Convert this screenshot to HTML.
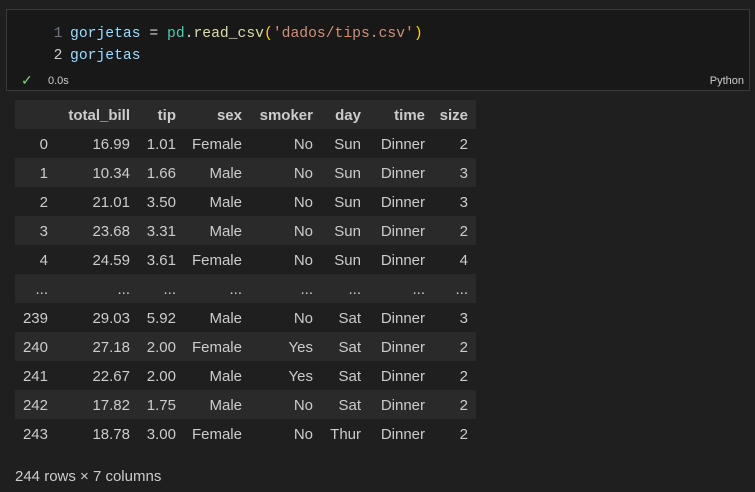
<!DOCTYPE html><html><head><style>
body{margin:0;width:755px;height:492px;background:#1f1f1f;overflow:hidden;font-family:"Liberation Sans",sans-serif;color:#cccccc}
.cell{position:absolute;left:6px;top:9px;width:742px;height:80px;background:#181818;border:1px solid #3a3a3a}
.code{position:absolute;font-family:"Liberation Mono",monospace;font-size:14.7px;left:39px}
.ln{color:#6e7681;display:inline-block;width:24px;text-align:center}
table{position:absolute;left:15px;top:100px;border-collapse:collapse;font-size:15px;table-layout:fixed;width:461px}
td,th{height:29px;padding:2px 8px 0 0;text-align:right;white-space:nowrap;box-sizing:border-box;overflow:visible}
th{font-weight:bold}
</style></head><body>
<div class="cell">
<div class="code" style="top:16px"><span class="ln">1</span><span style="color:#9cdcfe">gorjetas</span> <span style="color:#d4d4d4">=</span> <span style="color:#4ec9b0">pd</span><span style="color:#d4d4d4">.</span><span style="color:#dcdcaa">read_csv</span><span style="color:#ffd700">(</span><span style="color:#ce9178">'dados/tips.csv'</span><span style="color:#ffd700">)</span></div>
<div class="code" style="top:38px"><span class="ln" style="color:#ccc">2</span><span style="color:#9cdcfe">gorjetas</span></div>
<div style="position:absolute;left:14px;top:62px;color:#89d185;font-size:14px">✓</div>
<div style="position:absolute;left:41px;top:65px;font-size:11px;color:#ccc">0.0s</div>
<div style="position:absolute;right:5px;top:65px;font-size:11px;color:#ccc">Python</div>
</div>
<table>
<colgroup><col style="width:41px"><col style="width:82px"><col style="width:46px"><col style="width:66px"><col style="width:71px"><col style="width:48px"><col style="width:64px"><col style="width:43px"></colgroup>
<tr style="background:#2a2a2a"><th></th><th>total_bill</th><th>tip</th><th>sex</th><th>smoker</th><th>day</th><th>time</th><th>size</th></tr>
<tr><td>0</td><td>16.99</td><td>1.01</td><td>Female</td><td>No</td><td>Sun</td><td>Dinner</td><td>2</td></tr>
<tr style="background:#2a2a2a"><td>1</td><td>10.34</td><td>1.66</td><td>Male</td><td>No</td><td>Sun</td><td>Dinner</td><td>3</td></tr>
<tr><td>2</td><td>21.01</td><td>3.50</td><td>Male</td><td>No</td><td>Sun</td><td>Dinner</td><td>3</td></tr>
<tr style="background:#2a2a2a"><td>3</td><td>23.68</td><td>3.31</td><td>Male</td><td>No</td><td>Sun</td><td>Dinner</td><td>2</td></tr>
<tr><td>4</td><td>24.59</td><td>3.61</td><td>Female</td><td>No</td><td>Sun</td><td>Dinner</td><td>4</td></tr>
<tr style="background:#2a2a2a"><td>...</td><td>...</td><td>...</td><td>...</td><td>...</td><td>...</td><td>...</td><td>...</td></tr>
<tr><td>239</td><td>29.03</td><td>5.92</td><td>Male</td><td>No</td><td>Sat</td><td>Dinner</td><td>3</td></tr>
<tr style="background:#2a2a2a"><td>240</td><td>27.18</td><td>2.00</td><td>Female</td><td>Yes</td><td>Sat</td><td>Dinner</td><td>2</td></tr>
<tr><td>241</td><td>22.67</td><td>2.00</td><td>Male</td><td>Yes</td><td>Sat</td><td>Dinner</td><td>2</td></tr>
<tr style="background:#2a2a2a"><td>242</td><td>17.82</td><td>1.75</td><td>Male</td><td>No</td><td>Sat</td><td>Dinner</td><td>2</td></tr>
<tr><td>243</td><td>18.78</td><td>3.00</td><td>Female</td><td>No</td><td>Thur</td><td>Dinner</td><td>2</td></tr>
</table>
<div style="position:absolute;left:15px;top:468px;font-size:15px">244 rows × 7 columns</div>
</body></html>
